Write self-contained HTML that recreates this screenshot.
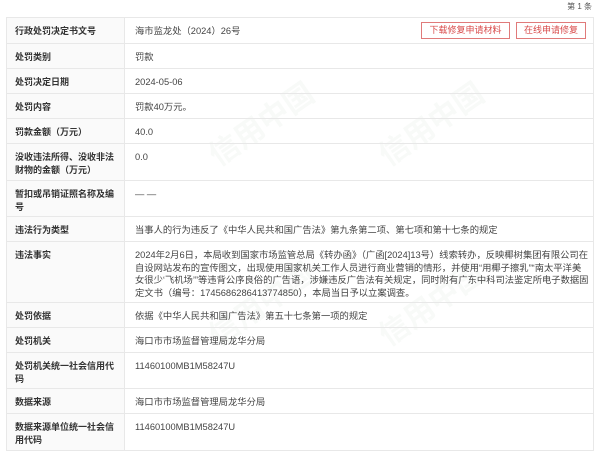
<!DOCTYPE html>
<html><head><meta charset="utf-8"><style>
body{margin:0;width:600px;height:455px;background:#fff;font-family:"Liberation Sans","Noto Sans CJK SC",sans-serif;font-size:9px;color:#333;position:relative;overflow:hidden}
.top{position:absolute;right:8px;top:1px;font-size:8px;color:#555}
table{position:absolute;left:6px;top:17px;width:588px;border-collapse:collapse;background:transparent}
td{border:1px solid #e8e8e8;vertical-align:top;padding:0;line-height:13px}
td.l{width:101px;padding:7px 8px 0 8px;font-weight:bold;color:#333;background:rgba(246,246,246,.6)}
td.v{padding:7px 10px 0 10px;color:#444;font-size:9.3px}
.btn{position:absolute;top:22px;height:15px;border:1px solid #e07a7a;color:#d84a4a;font-size:9px;line-height:15px;text-align:center;background:#fff}
.wm{position:absolute;color:rgba(150,190,160,.07);font-size:30px;font-weight:bold;transform:rotate(-35deg)}
</style></head><body>
<div class="top">第 1 条</div>
<div class="wm" style="left:200px;top:100px">信用中国</div>
<div class="wm" style="left:370px;top:100px">信用中国</div>
<div class="wm" style="left:200px;top:280px">信用中国</div>
<div class="wm" style="left:370px;top:280px">信用中国</div>
<table>
<tr style="height:26px"><td class="l">行政处罚决定书文号</td><td class="v">海市监龙处（2024）26号</td></tr>
<tr style="height:25px"><td class="l">处罚类别</td><td class="v">罚款</td></tr>
<tr style="height:25px"><td class="l">处罚决定日期</td><td class="v">2024-05-06</td></tr>
<tr style="height:25px"><td class="l">处罚内容</td><td class="v">罚款40万元。</td></tr>
<tr style="height:25px"><td class="l">罚款金额（万元）</td><td class="v">40.0</td></tr>
<tr style="height:37px"><td class="l">没收违法所得、没收非法财物的金额（万元）</td><td class="v">0.0</td></tr>
<tr style="height:36px"><td class="l">暂扣或吊销证照名称及编号</td><td class="v">— —</td></tr>
<tr style="height:25px"><td class="l">违法行为类型</td><td class="v">当事人的行为违反了《中华人民共和国广告法》第九条第二项、第七项和第十七条的规定</td></tr>
<tr style="height:61px"><td class="l">违法事实</td><td class="v" style="line-height:12.5px;padding-right:4px">2024年2月6日，本局收到国家市场监管总局《转办函》（广函[2024]13号）线索转办，反映椰树集团有限公司在自设网站发布的宣传图文，出现使用国家机关工作人员进行商业营销的情形，并使用“用椰子擦乳”“南太平洋美女很少‘飞机场’”等违背公序良俗的广告语，涉嫌违反广告法有关规定，同时附有广东中科司法鉴定所电子数据固定文书（编号：1745686286413774850），本局当日予以立案调查。</td></tr>
<tr style="height:25px"><td class="l">处罚依据</td><td class="v">依据《中华人民共和国广告法》第五十七条第一项的规定</td></tr>
<tr style="height:25px"><td class="l">处罚机关</td><td class="v">海口市市场监督管理局龙华分局</td></tr>
<tr style="height:36px"><td class="l">处罚机关统一社会信用代码</td><td class="v">11460100MB1M58247U</td></tr>
<tr style="height:25px"><td class="l">数据来源</td><td class="v">海口市市场监督管理局龙华分局</td></tr>
<tr style="height:37px"><td class="l">数据来源单位统一社会信用代码</td><td class="v">11460100MB1M58247U</td></tr>
</table>
<div class="btn" style="left:421px;width:87px">下载修复申请材料</div>
<div class="btn" style="left:516px;width:68px">在线申请修复</div>
</body></html>
